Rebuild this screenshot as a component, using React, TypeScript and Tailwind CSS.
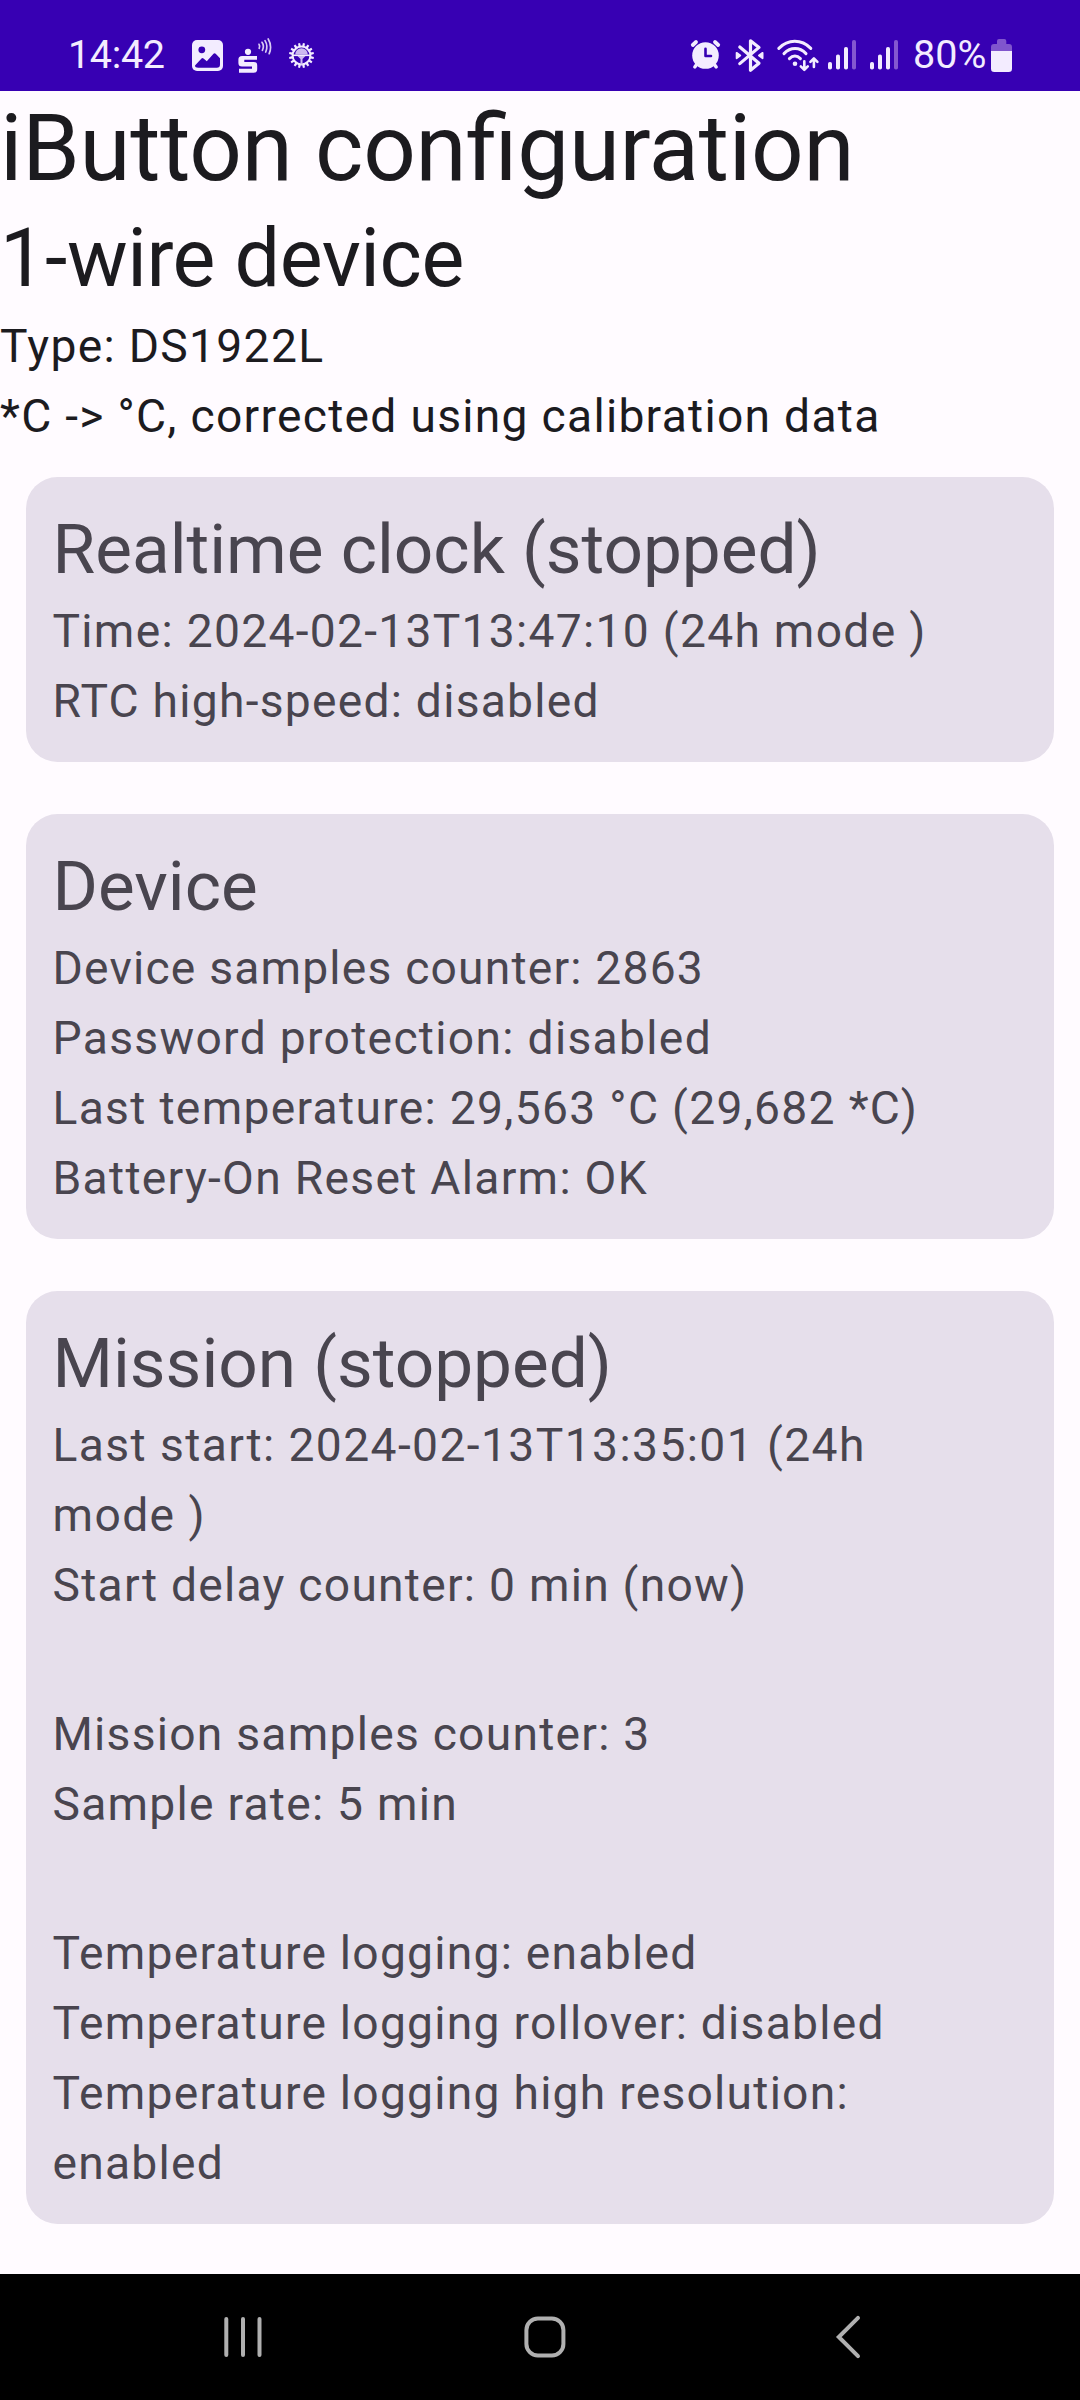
import type { ReactNode } from "react";

const INK = "#f3ecff";
const DIM = "#8457d0";

function ImageIcon() {
  return (
    <svg className="ml-[27px] h-[35px] w-[35px]" viewBox="190 38 35 35">
      <rect x="192" y="40" width="31" height="31" rx="5" fill={INK} />
      <circle cx="201.8" cy="49.8" r="3.4" fill="#3700b3" />
      <path d="M195 65.5L201.5 58.5Q202.5 57.6 203.5 58.5L206.8 61.3L213.5 53.8Q214.6 52.8 215.7 53.8L220 58.3V64.5Q220 67.7 216.8 67.7H198.2Q195 67.7 195 65.5Z" fill="#3700b3" />
    </svg>
  );
}

function ContactlessIcon() {
  return (
    <svg className="ml-[11px] h-[39px] w-[37px]" viewBox="236 36 37 39">
      <circle cx="248" cy="51.8" r="3.1" fill={INK} />
      <path d="M242 56H257V59.8H244.3V62H254Q257.2 62 257.2 65.2V69.2Q257.2 72.7 253.7 72.7H239V68.8H252V66.6H242Q238.4 66.6 238.4 63V59.6Q238.4 56 242 56Z" fill={INK} />
      <g fill="none" stroke="#d9caf4" strokeWidth="1.7" strokeLinecap="round">
        <path d="M259 44.3Q260.2 46 259.2 48.3" />
        <path d="M262 42.3Q264.6 46 262.4 50.3" />
        <path d="M265 40.6Q268.4 46 265.7 52" />
        <path d="M268.2 39Q272.4 46 269.2 53.6" />
      </g>
    </svg>
  );
}

function GearIcon() {
  const teeth = Array.from({ length: 16 }, (_, i) => (i + 0.5) * 22.5);
  return (
    <svg className="ml-[14px] h-[29px] w-[29px]" viewBox="-14.5 -14.5 29 29">
      {teeth.map((a) => (
        <path key={a} d="M-1 -12.5H1L1.2 -9H-1.2Z" transform={`rotate(${a})`} fill={INK} />
      ))}
      <circle r="8.9" fill="none" stroke={INK} strokeWidth="2" />
      <path d="M-6.3 -1A6.3 6.3 0 0 1 6.3 -1Z" fill="#cdb9f0" />
      <path d="M-9 -1H9V0.6H-9Z" fill={INK} />
      <path d="M-4 0.6H4L1 3.4V9H-1V3.4Z" fill="#cdb9f0" />
    </svg>
  );
}

function AlarmIcon() {
  return (
    <svg className="h-[35px] w-[34px]" viewBox="688 38 34 35">
      <g stroke={INK} strokeWidth="3.8" strokeLinecap="round">
        <path d="M692.8 45L696 42M718.2 45L715 42" />
        <path d="M697 64L694.8 67M714 64L716.2 67" strokeWidth="3.4" />
      </g>
      <circle cx="705.5" cy="55.5" r="13.3" fill={INK} />
      <path d="M705.5 48.8V56H711" fill="none" stroke="#3700b3" strokeWidth="2.6" strokeLinecap="round" strokeLinejoin="round" />
    </svg>
  );
}

function BluetoothIcon() {
  return (
    <svg className="ml-[11px] h-[37px] w-[33px]" viewBox="733 36 33 37">
      <path d="M739.8 46L759 62.3L750.5 69.3V39.8L759 46.4L739.8 62.6" fill="none" stroke={INK} strokeWidth="3.2" strokeLinecap="round" strokeLinejoin="round" />
      <path d="M736.6 51.8L740.3 54.5L736.6 57.2ZM762.6 51.8L758.9 54.5L762.6 57.2Z" fill={INK} stroke={INK} strokeWidth="1.8" strokeLinejoin="round" />
    </svg>
  );
}

function WifiIcon() {
  return (
    <svg className="ml-[10px] h-[37px] w-[44px]" viewBox="776 36 44 37">
      <g fill="none" stroke={INK} strokeWidth="3" strokeLinecap="round">
        <path d="M778.8 47.4C788 38 801.5 38 810.8 47.4" />
        <path d="M784 52.6C790.6 45.9 799.6 45.9 806 52.6" />
        <path d="M789.4 57.6C792.8 54.2 797 54.2 800.4 57.6" />
      </g>
      <circle cx="795" cy="62.8" r="2.3" fill={INK} />
      <g fill="none" stroke={INK} strokeWidth="2.6" strokeLinecap="round" strokeLinejoin="round">
        <path d="M804.3 60.2V68.6M800.8 65.4L804.3 68.8L807.8 65.4" />
        <path d="M813.9 66V57.6M810.4 60.8L813.9 57.3L817.4 60.8" />
      </g>
    </svg>
  );
}

function SignalIcon({ className }: { className: string }) {
  return (
    <svg className={className} viewBox="0 0 28 30">
      <rect x="0" y="22" width="4" height="7.5" rx="1.8" fill={INK} />
      <rect x="8" y="14.5" width="4" height="15" rx="1.8" fill={INK} />
      <rect x="16" y="7" width="4" height="22.5" rx="1.8" fill={INK} />
      <rect x="24" y="0" width="4" height="29.5" rx="1.8" fill={DIM} />
    </svg>
  );
}

function BatteryIcon() {
  return (
    <svg className="ml-[6px] h-[33px] w-[21px]" viewBox="0 0 21 33">
      <path d="M6 5V2Q6 0 8 0H13.3Q15.3 0 15.3 2V5H18Q21 5 21 8V12H0V8Q0 5 3 5Z" fill="#8055cd" />
      <path d="M0 12H21V29.7Q21 33 17.7 33H3.3Q0 33 0 29.7Z" fill={INK} />
    </svg>
  );
}

function StatusBar() {
  return (
    <header className="flex h-[91px] items-start justify-between bg-[#3700b3] pr-[68px] pl-[68px] pt-[35px] text-[39.5px] leading-[40px] text-[#f3ecff]">
      <div className="flex h-[40px] items-center">
        <span className="w-[95px] whitespace-nowrap tracking-[-0.35px]">14:42</span>
        <ImageIcon />
        <ContactlessIcon />
        <GearIcon />
      </div>
      <div className="flex h-[40px] items-center">
        <AlarmIcon />
        <BluetoothIcon />
        <WifiIcon />
        <SignalIcon className="ml-[8px] h-[30px] w-[28px]" />
        <SignalIcon className="ml-[14px] h-[30px] w-[28px]" />
        <span className="ml-[15px] w-[72px] whitespace-nowrap">80%</span>
        <BatteryIcon />
      </div>
    </header>
  );
}

function Card({ title, children }: { title: string; children: ReactNode }) {
  return (
    <section className="rounded-[31.5px] bg-[#e6dfeb] px-[26.5px] py-[26px] text-[#49454f]">
      <h3 className="h-[93px] text-[69.3px] leading-[93px] tracking-normal">{title}</h3>
      {children}
    </section>
  );
}

export default function App() {
  return (
    <div className="flex h-[2400px] w-[1080px] flex-col overflow-hidden bg-[#fffbff] font-['Roboto',sans-serif] text-[#1c1b1f]">
      <StatusBar />
      <main className="flex-1 text-[46.2px] leading-[70px] tracking-[1.25px]">
        <div>
          <h1 className="h-[116px] text-[92.4px] leading-[116px] tracking-[-0.26px] [font-feature-settings:'liga']">iButton configuration</h1>
          <h2 className="h-[104px] text-[80.85px] leading-[104px] tracking-[-0.45px]">1-wire device</h2>
          <p className="tracking-[1.31px]">Type: DS1922L</p>
          <p className="tracking-[1.28px]">*C -&gt; °C, corrected using calibration data</p>
        </div>
        <div className="flex flex-col gap-[52px] px-[26px] pt-[26px]">
          <Card title="Realtime clock (stopped)">
            <p className="tracking-[1.29px]">Time: 2024-02-13T13:47:10 (24h mode )</p>
            <p>RTC high-speed: disabled</p>
          </Card>
          <Card title="Device">
            <p className="tracking-[1.2px]">Device samples counter: 2863</p>
            <p className="tracking-[1.31px]">Password protection: disabled</p>
            <p className="tracking-[1.31px]">Last temperature: 29,563 °C (29,682 *C)</p>
            <p className="tracking-[1.29px]">Battery-On Reset Alarm: OK</p>
          </Card>
          <Card title="Mission (stopped)">
            <p className="tracking-[1.41px]">
              Last start: 2024-02-13T13:35:01 (24h
              <br />
              mode )
            </p>
            <p>Start delay counter: 0 min (now)</p>
            <p className="mt-[79px]">Mission samples counter: 3</p>
            <p>Sample rate: 5 min</p>
            <p className="mt-[79px]">Temperature logging: enabled</p>
            <p>Temperature logging rollover: disabled</p>
            <p>
              Temperature logging high resolution:
              <br />
              enabled
            </p>
          </Card>
        </div>
      </main>
      <nav className="flex h-[126px] items-center bg-black pl-[220px] text-[#b0b0b0]">
        <svg className="h-[44px] w-[48px]" viewBox="220 2315 48 44" stroke="currentColor" strokeWidth="4" strokeLinecap="round">
          <path d="M226.3 2319V2355M243 2319V2355M259.5 2319V2355" />
        </svg>
        <svg className="ml-[255px] h-[44px] w-[44px]" viewBox="523 2315 44 44" fill="none" stroke="currentColor" strokeWidth="4">
          <rect x="526.4" y="2318.5" width="37" height="37" rx="11.5" />
        </svg>
        <svg className="ml-[265px] h-[46px] w-[36px]" viewBox="832 2314 36 46" fill="none" stroke="currentColor" strokeWidth="4" strokeLinecap="round">
          <path d="M858 2317.8L838.8 2337L858 2356.2" />
        </svg>
      </nav>
    </div>
  );
}
